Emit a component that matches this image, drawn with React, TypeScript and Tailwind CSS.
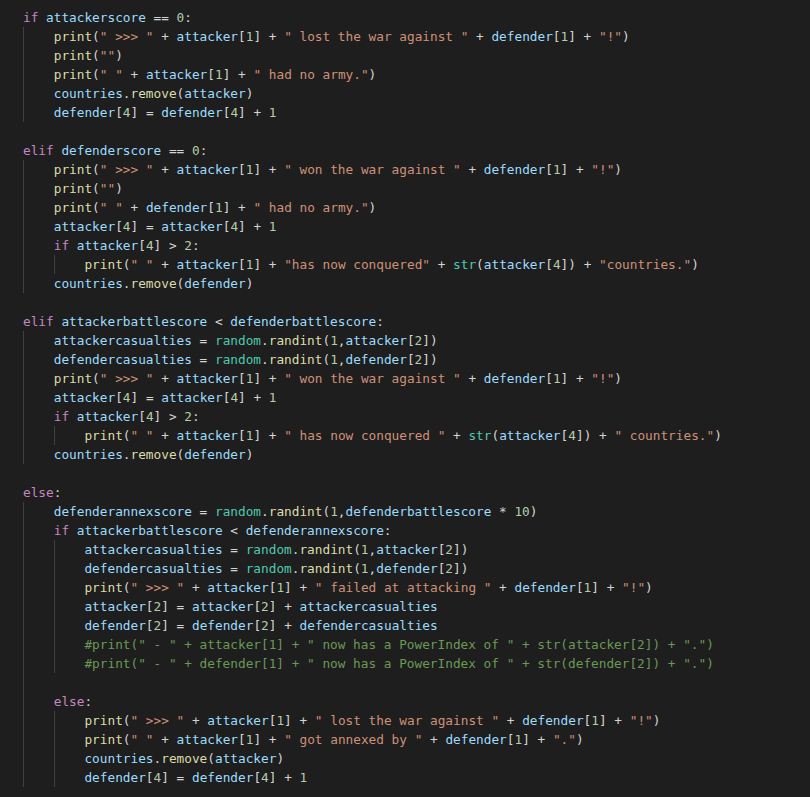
import React from "react";

const CODE: string[] = [
  `if attackerscore == 0:`,
  `    print(" >>> " + attacker[1] + " lost the war against " + defender[1] + "!")`,
  `    print("")`,
  `    print(" " + attacker[1] + " had no army.")`,
  `    countries.remove(attacker)`,
  `    defender[4] = defender[4] + 1`,
  ``,
  `elif defenderscore == 0:`,
  `    print(" >>> " + attacker[1] + " won the war against " + defender[1] + "!")`,
  `    print("")`,
  `    print(" " + defender[1] + " had no army.")`,
  `    attacker[4] = attacker[4] + 1`,
  `    if attacker[4] > 2:`,
  `        print(" " + attacker[1] + "has now conquered" + str(attacker[4]) + "countries.")`,
  `    countries.remove(defender)`,
  ``,
  `elif attackerbattlescore < defenderbattlescore:`,
  `    attackercasualties = random.randint(1,attacker[2])`,
  `    defendercasualties = random.randint(1,defender[2])`,
  `    print(" >>> " + attacker[1] + " won the war against " + defender[1] + "!")`,
  `    attacker[4] = attacker[4] + 1`,
  `    if attacker[4] > 2:`,
  `        print(" " + attacker[1] + " has now conquered " + str(attacker[4]) + " countries.")`,
  `    countries.remove(defender)`,
  ``,
  `else:`,
  `    defenderannexscore = random.randint(1,defenderbattlescore * 10)`,
  `    if attackerbattlescore < defenderannexscore:`,
  `        attackercasualties = random.randint(1,attacker[2])`,
  `        defendercasualties = random.randint(1,defender[2])`,
  `        print(" >>> " + attacker[1] + " failed at attacking " + defender[1] + "!")`,
  `        attacker[2] = attacker[2] + attackercasualties`,
  `        defender[2] = defender[2] + defendercasualties`,
  `        #print(" - " + attacker[1] + " now has a PowerIndex of " + str(attacker[2]) + ".")`,
  `        #print(" - " + defender[1] + " now has a PowerIndex of " + str(defender[2]) + ".")`,
  ``,
  `    else:`,
  `        print(" >>> " + attacker[1] + " lost the war against " + defender[1] + "!")`,
  `        print(" " + attacker[1] + " got annexed by " + defender[1] + ".")`,
  `        countries.remove(attacker)`,
  `        defender[4] = defender[4] + 1`,
];

// guide levels for blank lines
const BLANK_GUIDES: Record<number, number> = { 35: 1 };

type Tok = { t: string; c: string };

const C = {
  kw: "text-[#C586C0]",
  fn: "text-[#DCDCAA]",
  cls: "text-[#4EC9B0]",
  v: "text-[#9CDCFE]",
  num: "text-[#B5CEA8]",
  str: "text-[#CE9178]",
  com: "text-[#6A9955]",
  op: "text-[#D4D4D4]",
};

function tokenize(src: string): Tok[] {
  const out: Tok[] = [];
  const re = /(#.*$)|("(?:[^"\\]|\\.)*")|([A-Za-z_]\w*)|(\d+)|(\s+)|(.)/g;
  let m: RegExpExecArray | null;
  while ((m = re.exec(src)) !== null) {
    if (m[1]) out.push({ t: m[1], c: C.com });
    else if (m[2]) out.push({ t: m[2], c: C.str });
    else if (m[3]) {
      const w = m[3];
      const next = src[re.lastIndex];
      let c = C.v;
      if (w === "if" || w === "elif" || w === "else") c = C.kw;
      else if (w === "str" || w === "random") c = C.cls;
      else if (next === "(") c = C.fn;
      out.push({ t: w, c });
    } else if (m[4]) out.push({ t: m[4], c: C.num });
    else if (m[5]) out.push({ t: m[5], c: C.op });
    else out.push({ t: m[6], c: C.op });
  }
  return out;
}

function Line({ text, idx }: { text: string; idx: number }) {
  const lead = text.match(/^ */)![0].length;
  const levels = text.length === 0 ? BLANK_GUIDES[idx] ?? 0 : Math.floor(lead / 4);
  const rest = text.slice(levels * 4);
  const toks = tokenize(rest);
  const guides = Array.from({ length: levels });
  return (
    <div className="flex h-[19px] items-stretch leading-[19px]">
      {guides.map((_, i) => (
        <span key={i} className="w-[30.72px] shrink-0 border-l border-[#404040]" />
      ))}
      <span className="whitespace-pre">
        {toks.map((tk, i) => (
          <span key={i} className={tk.c}>
            {tk.t}
          </span>
        ))}
      </span>
    </div>
  );
}

export default function App() {
  return (
    <div
      className="min-h-screen w-full bg-[#1e1e1e] pl-[23px] pt-[8px] text-[12.75px] text-[#D4D4D4]"
      style={{ fontFamily: '"DejaVu Sans Mono", "Liberation Mono", monospace' }}
    >
      {CODE.map((l, i) => (
        <Line key={i} text={l} idx={i} />
      ))}
    </div>
  );
}
